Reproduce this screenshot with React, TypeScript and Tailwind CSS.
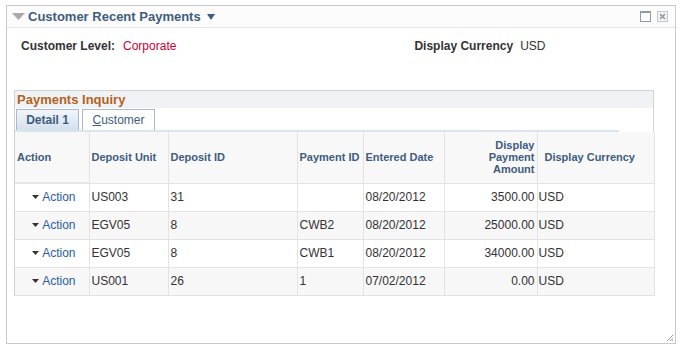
import React from "react";

const rows = [
  { unit: "US003", id: "31", pay: "", date: "08/20/2012", amt: "3500.00", cur: "USD" },
  { unit: "EGV05", id: "8", pay: "CWB2", date: "08/20/2012", amt: "25000.00", cur: "USD" },
  { unit: "EGV05", id: "8", pay: "CWB1", date: "08/20/2012", amt: "34000.00", cur: "USD" },
  { unit: "US001", id: "26", pay: "1", date: "07/02/2012", amt: "0.00", cur: "USD" },
];

const cell = "border-r border-b border-[#e3e3e3] px-[2px]";

export default function App() {
  return (
    <div className="w-[683px] h-[352px] bg-white overflow-hidden pt-[5px] pl-[6px] font-['Liberation_Sans',Arial,sans-serif]">
      <div className="w-[670px] h-[339px] border border-[#c9c9c9] flex flex-col relative">
        {/* pagelet header */}
        <div className="h-[22px] flex items-center justify-between border-b border-[#e6e6e6] bg-[#fcfcfc] pl-[5px] pr-[7px]">
          <div className="flex items-center gap-[3px]">
            <svg width="13" height="8" viewBox="0 0 13 8">
              <path d="M0 0 L13 0 L6.5 7 Z" fill="#a9a9a9" />
            </svg>
            <span className="text-[13px] font-bold text-[#3e5c7e]">Customer Recent Payments</span>
            <svg width="10" height="8" viewBox="0 0 10 8" className="ml-[2px]">
              <path d="M1 1 L9 1 L5 7 Z" fill="#3e5c7e" />
            </svg>
          </div>
          <div className="flex items-center gap-[6px]">
            <div className="w-[11px] h-[11px] border border-[#8e9aa6] border-t-[2px] bg-white" />
            <div className="w-[11px] h-[11px] border border-[#c3c9cf] bg-[#f4f4f4] flex items-center justify-center">
              <svg width="7" height="7" viewBox="0 0 7 7">
                <path d="M1 1 L6 6 M6 1 L1 6" stroke="#8e9aa6" strokeWidth="1.6" />
              </svg>
            </div>
          </div>
        </div>

        {/* customer info */}
        <div className="flex items-center h-[34px] pl-[14px] pt-[2px] text-[12px]">
          <span className="font-bold text-[#333]">Customer Level:</span>
          <span className="ml-[8px] text-[#cc0033]">Corporate</span>
          <span className="ml-[238px] font-bold text-[#333]">Display Currency</span>
          <span className="ml-[7px] text-[#333]">USD</span>
        </div>

        {/* payments group */}
        <div className="mt-[28px] ml-[7px] w-[640px] border border-[#d2d2d2] border-b-0">
          <div className="h-[17px] bg-[#f0f3f5] flex items-center pl-[2px] text-[13px] font-bold text-[#b4621c]">
            Payments Inquiry
          </div>
          <div className="flex items-end h-[22px] pl-[1px] gap-[3px] bg-white">
            <div className="w-[63px] h-[21px] border border-[#a9b9c9] border-b-0 bg-gradient-to-b from-[#f1f5fa] to-[#d4e0ee] flex items-center justify-center text-[12px] font-bold text-[#3e5c7e]">
              Detail 1
            </div>
            <div className="w-[73px] h-[21px] border border-[#a9b9c9] border-b-0 bg-white flex items-center justify-center text-[12px] text-[#3e5c7e]">
              <span><span className="underline">C</span>ustomer</span>
            </div>
          </div>
          <div className="h-[2px] w-[604px] bg-[#d9e4f1]" />
          <table className="border-collapse table-fixed w-[639px] text-[12px]">
            <colgroup>
              <col className="w-[74px]" />
              <col className="w-[79px]" />
              <col className="w-[129px]" />
              <col className="w-[66px]" />
              <col className="w-[81px]" />
              <col className="w-[93px]" />
              <col className="w-[117px]" />
            </colgroup>
            <thead>
              <tr className="h-[51px] bg-[#f8f8f8] text-[11px] font-bold text-[#3e5c7e] leading-[12px]">
                <th className={`${cell} text-left font-bold`}>Action</th>
                <th className={`${cell} text-left font-bold`}>Deposit Unit</th>
                <th className={`${cell} text-left font-bold`}>Deposit ID</th>
                <th className={`${cell} text-left font-bold`}>Payment ID</th>
                <th className={`${cell} text-left font-bold`}>Entered Date</th>
                <th className={`${cell} text-right font-bold`}>
                  Display
                  <br />
                  Payment
                  <br />
                  Amount
                </th>
                <th className={`${cell} text-left font-bold pl-[7px]`}>Display Currency</th>
              </tr>
            </thead>
            <tbody className="text-[#333]">
              {rows.map((r, i) => (
                <tr key={i} className={`h-[28px] ${i % 2 === 1 ? "bg-[#f7f7f7]" : "bg-white"}`}>
                  <td className={`${cell} ${i === 0 ? "border-t-[2px] border-t-[#e6e6e6]" : ""}`}>
                    <div className="flex items-center justify-end pr-[11px] gap-[3px] text-[#2a5e9c]">
                      <svg width="7" height="4" viewBox="0 0 7 4">
                        <path d="M0 0 L7 0 L3.5 4 Z" fill="#333" />
                      </svg>
                      <span>Action</span>
                    </div>
                  </td>
                  <td className={cell}>{r.unit}</td>
                  <td className={cell}>{r.id}</td>
                  <td className={cell}>{r.pay}</td>
                  <td className={cell}>{r.date}</td>
                  <td className={`${cell} text-right px-0`}>{r.amt}</td>
                  <td className={`${cell} pl-[1px]`}>{r.cur}</td>
                </tr>
              ))}
            </tbody>
          </table>
        </div>

        {/* resize grip */}
        <svg width="8" height="8" viewBox="0 0 8 8" className="absolute right-[1px] bottom-[1px]">
          <path d="M7 1 L1 7 M7 4 L4 7 M7 6 L6 7" stroke="#9a9a9a" strokeWidth="1" />
        </svg>
      </div>
    </div>
  );
}
